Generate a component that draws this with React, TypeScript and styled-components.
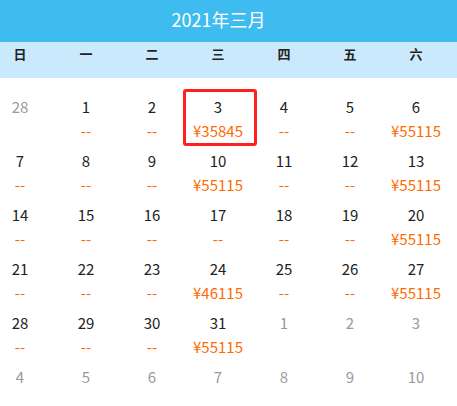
import React from "react";
import styled, { createGlobalStyle } from "styled-components";

const Global = createGlobalStyle`
  html, body { margin: 0; padding: 0; background: #fff; overflow: hidden; }
  body { font-family: "Noto Sans CJK SC", "Noto Sans", sans-serif; }
`;

const Wrap = styled.div`
  width: 457px;
  overflow: hidden;
`;

const Title = styled.div`
  height: 42px;
  background: #3ebcf0;
  color: #fff;
  font-size: 18px;
  line-height: 38px;
  text-align: center;
  padding-right: 20px;
`;

const WeekBar = styled.div`
  height: 36px;
  background: #cbe9fc;
`;

const Grid = styled.div`
  display: grid;
  grid-template-columns: repeat(7, 66px);
  margin-left: -13px;
`;

const WeekLabel = styled.div`
  text-align: center;
  font-size: 13px;
  font-weight: bold;
  color: #222;
  line-height: 24px;
`;

const Days = styled(Grid)`
  margin-top: 11px;
`;

const Cell = styled.div<{ $selected?: boolean }>`
  position: relative;
  height: 54px;
  padding-top: 6px;
  box-sizing: border-box;
  text-align: center;
  ${(p) =>
    p.$selected &&
    `
    &::after {
      content: "";
      position: absolute;
      top: 0;
      left: -2px;
      width: 74px;
      height: 57px;
      box-sizing: border-box;
      border: 3px solid #ff2121;
      border-radius: 3px;
    }
  `}
`;

const DayNum = styled.div<{ $other?: boolean }>`
  font-size: 15px;
  line-height: 24px;
  color: ${(p) => (p.$other ? "#9a9a9a" : "#222")};
`;

const Price = styled.div`
  font-size: 15px;
  line-height: 24px;
  color: #ff6a00;
`;

type Day = { d: number; other?: boolean; price?: string; sel?: boolean };

const weeks = ["日", "一", "二", "三", "四", "五", "六"];

const p = (n: number, price = "--", sel = false): Day => ({ d: n, price, sel });
const o = (n: number): Day => ({ d: n, other: true });

const days: Day[] = [
  o(28), p(1), p(2), p(3, "¥35845", true), p(4), p(5), p(6, "¥55115"),
  p(7), p(8), p(9), p(10, "¥55115"), p(11), p(12), p(13, "¥55115"),
  p(14), p(15), p(16), p(17), p(18), p(19), p(20, "¥55115"),
  p(21), p(22), p(23), p(24, "¥46115"), p(25), p(26), p(27, "¥55115"),
  p(28), p(29), p(30), p(31, "¥55115"), o(1), o(2), o(3),
  o(4), o(5), o(6), o(7), o(8), o(9), o(10),
];

export default function App() {
  return (
    <Wrap>
      <Global />
      <Title>2021年三月</Title>
      <WeekBar>
        <Grid>
          {weeks.map((w) => (
            <WeekLabel key={w}>{w}</WeekLabel>
          ))}
        </Grid>
      </WeekBar>
      <Days>
        {days.map((day, i) => (
          <Cell key={i} $selected={day.sel}>
            <DayNum $other={day.other}>{day.d}</DayNum>
            {day.price && <Price>{day.price}</Price>}
          </Cell>
        ))}
      </Days>
    </Wrap>
  );
}
